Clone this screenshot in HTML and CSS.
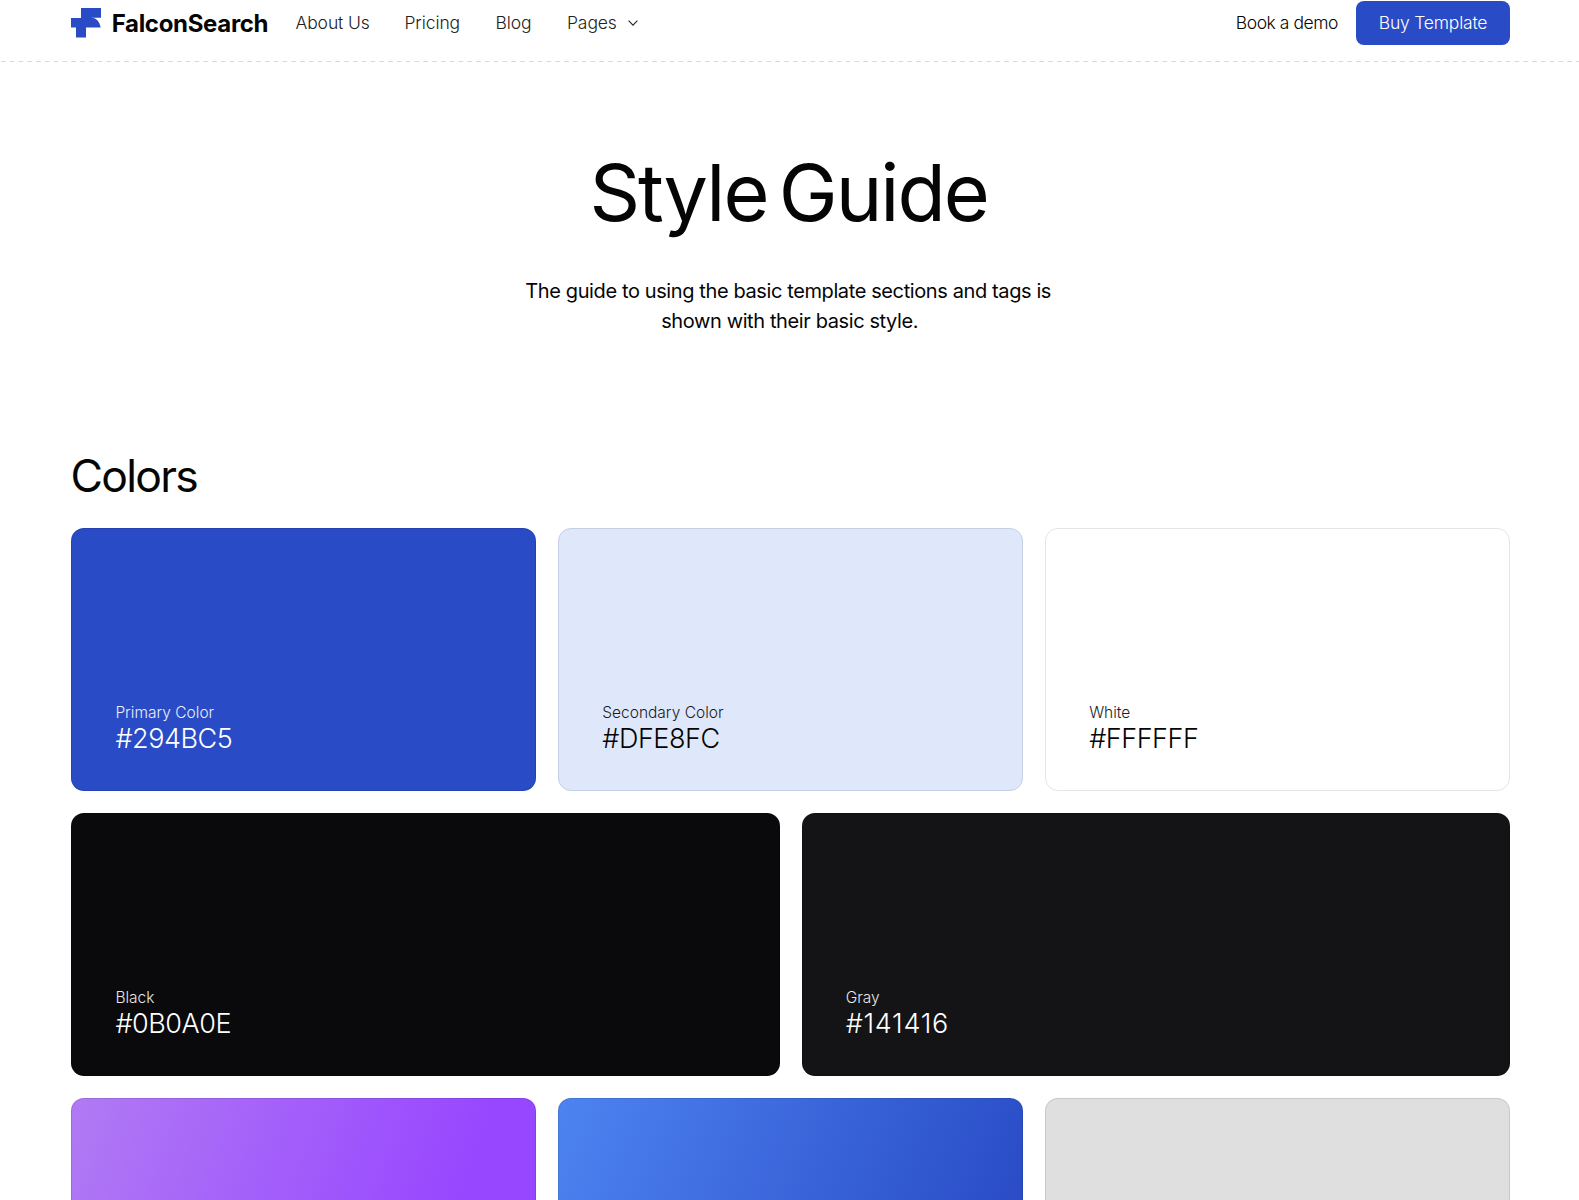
FILE: index.html
```html
<!DOCTYPE html>
<html lang="en">
<head>
<meta charset="utf-8">
<title>FalconSearch – Style Guide</title>
<link rel="stylesheet" href="styles.css">
</head>
<body>
<header class="header">
  <a class="logo">
    <svg class="logo-mark" width="30" height="30" viewBox="0 0 30 30"><path d="M10 0H30V9.7H20Q28 9.7 29.7 19.5H15V29.5H5V19.5H0V10H10Z" fill="#294bc5"/></svg>
    <span class="logo-text">FalconSearch</span>
  </a>
  <nav class="nav">
    <a class="nav-about">About Us</a>
    <a class="nav-pricing">Pricing</a>
    <a class="nav-blog">Blog</a>
    <a class="nav-pages">Pages</a>
    <svg class="chevron" width="10" height="6" viewBox="0 0 10 6"><path d="M.6 .7 5 5.1 9.4 .7" fill="none" stroke="#222" stroke-width="1.1"/></svg>
  </nav>
  <div class="actions">
    <a class="demo">Book a demo</a>
    <a class="buy"><span>Buy Template</span></a>
  </div>
</header>
<svg class="divider" width="1579" height="2"><line x1="0" y1=".5" x2="1579" y2=".5" stroke="#d8d8d8" stroke-width="1" stroke-dasharray="4.6 4.2" stroke-dashoffset="-1"/></svg>
<main class="container">
  <section class="hero">
    <h1><span>Style Guide</span></h1>
    <p><span class="line-1">The guide to using the basic template sections and tags is</span><br><span class="line-2">shown with their basic style.</span></p>
  </section>
  <h2><span>Colors</span></h2>
  <div class="rows">
    <div class="row">
      <div class="card primary"><span class="label">Primary Color</span><span class="hex">#294BC5</span></div>
      <div class="card secondary"><span class="label">Secondary Color</span><span class="hex">#DFE8FC</span></div>
      <div class="card white"><span class="label">White</span><span class="hex">#FFFFFF</span></div>
    </div>
    <div class="row">
      <div class="card black"><span class="label">Black</span><span class="hex">#0B0A0E</span></div>
      <div class="card gray"><span class="label">Gray</span><span class="hex">#141416</span></div>
    </div>
    <div class="row last">
      <div class="card violet"></div>
      <div class="card blue"></div>
      <div class="card silver"></div>
    </div>
  </div>
</main>
</body>
</html>
```
FILE: styles.css
```css
* { box-sizing: border-box; }
body { margin: 0; height: 1200px; background: #fff; color: #050505; font-family: Inter, "Liberation Sans", sans-serif; font-variation-settings: "opsz" 14; }
.header { height: 61px; padding: 1px 69px 0 71.4px; display: flex; align-items: flex-start; }
.header > * { height: 43px; display: flex; align-items: center; white-space: nowrap; }
.logo { width: 224.1px; gap: 10.3px; }
.logo-text { font-size: 24px; font-weight: 700; letter-spacing: -0.32px; padding-top: 2px; }
.nav { font-size: 17.5px; font-weight: 300; color: #222; letter-spacing: -0.1px; }
.nav-about { width: 109px; }
.nav-pricing { width: 91px; }
.nav-blog { width: 71.5px; }
.nav-pages { width: 61px; }
.actions { margin-left: auto; gap: 18px; font-size: 17.5px; letter-spacing: -0.45px; }
.demo { font-weight: 350; }
.buy { width: 154px; height: 44px; border-radius: 8px; background: #294bc5; color: #fff; font-weight: 300; display: flex; align-items: center; justify-content: center; letter-spacing: -0.2px; }
.divider { display: block; }
.container { padding: 0 69px 0 71.4px; }
.hero { padding-top: 82px; text-align: center; }
h1 { margin: 0; padding-right: 4px; font-size: 79px; line-height: 94px; font-weight: 400; letter-spacing: -2px; word-spacing: -9px; }
.hero p { margin: 38px 0 0; padding-right: 5px; font-size: 20px; line-height: 29.5px; font-weight: 400; letter-spacing: -0.39px; }
.line-2 { padding-left: 3px; }
h2 { margin: 110px 0 0; font-size: 44.5px; line-height: 60px; font-weight: 400; letter-spacing: -1.7px; text-indent: -1px; }
.rows { display: grid; gap: 22px; margin-top: 22px; }
.row { display: flex; gap: 22px; height: 263px; }
.row.last { height: 101.5px; }
.card { flex: 1; border-radius: 13px; border: 1px solid rgba(0, 0, 0, .1); padding: 0 43px 35.5px; display: flex; flex-direction: column; justify-content: flex-end; font-weight: 300; background-origin: border-box; }
.last .card { border-bottom: 0; border-radius: 13px 13px 0 0; background-size: 100% 263px; }
.label { font-size: 15.5px; line-height: 20px; opacity: .9; }
.hex { font-size: 27px; line-height: 32px; letter-spacing: -0.45px; }
.primary { background-color: #294bc5; color: #fff; }
.secondary { background-color: #dfe8fb; border-color: #c2cfe4; }
.white { background-color: #fff; border-color: #e5e5e5; }
.black { background-color: #0a0a0c; color: #fff; }
.gray { background-color: #141416; color: #fff; }
.gray .hex { letter-spacing: 0.7px; }
.violet { background-image: linear-gradient(110deg, #b17af4 0%, #9747ff 76%); }
.blue { background-image: linear-gradient(112deg, #4d83f1 0%, #294bc5 90%); }
.silver { background-color: #dfdfdf; border-color: #c8c8c8; }
```
